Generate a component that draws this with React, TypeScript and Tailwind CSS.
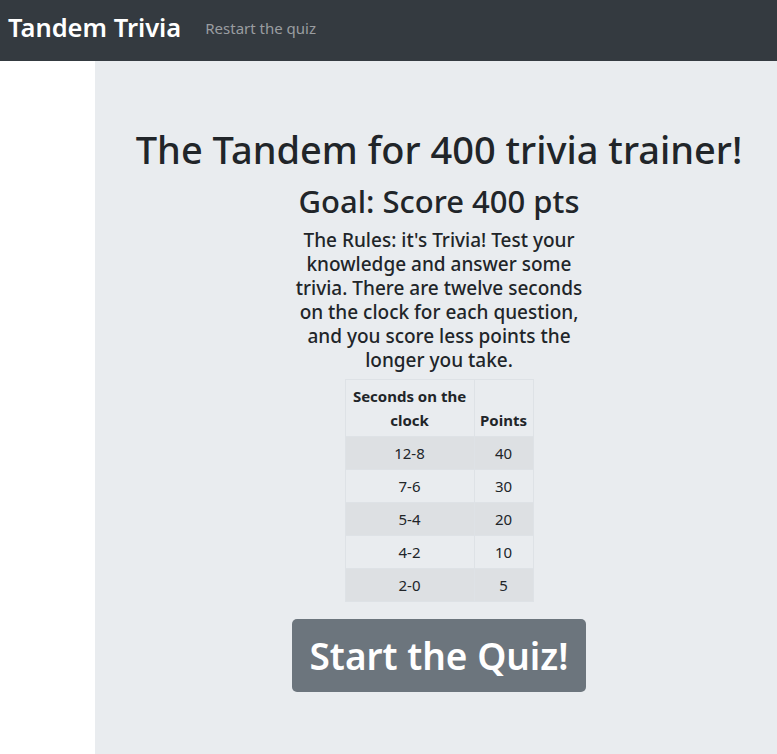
import React from 'react'

const rows = [
  ['12-8', '40'],
  ['7-6', '30'],
  ['5-4', '20'],
  ['4-2', '10'],
  ['2-0', '5'],
]

export default function App() {
  return (
    <div className="min-h-[754px] w-[777px] overflow-hidden bg-white font-['Noto_Sans',sans-serif] text-[#212529] flex flex-col">
      <nav className="h-[61px] bg-[#343a40] flex items-center px-2 gap-[24px] shrink-0">
        <span className="text-white text-[25.5px] font-semibold leading-none -mt-[5px]">Tandem Trivia</span>
        <a className="text-[#9a9da0] text-[15px] -mt-[4px]">Restart the quiz</a>
      </nav>
      <div className="flex flex-1">
        <div className="w-[95px] shrink-0" />
        <main className="w-[688px] shrink-0 bg-[#e9ecef] pt-16 pb-16 flex flex-col items-center">
          <h1 className="text-[38px] font-medium leading-[1.2] mt-[2px] mb-[10px]">The Tandem for 400 trivia trainer!</h1>
          <h2 className="text-[31px] font-medium leading-[1.2]">Goal: Score 400 pts</h2>
          <p className="w-[300px] text-center text-[19px] font-medium leading-[24px] mt-[8px] mb-[7px]">
            The Rules: it's Trivia! Test your knowledge and answer some trivia. There are twelve seconds on the clock for each question, and you score less points the longer you take.
          </p>
          <table className="border-collapse text-[15px] leading-[24px] mb-[17px]">
            <thead>
              <tr>
                <th className="w-[129px] border border-[#dee2e6] px-[5px] py-[4px] font-bold align-bottom">Seconds on the clock</th>
                <th className="w-[59px] border border-[#dee2e6] px-[5px] py-[4px] font-bold align-bottom">Points</th>
              </tr>
            </thead>
            <tbody>
              {rows.map(([s, p], i) => (
                <tr key={s} className={i % 2 === 0 ? 'bg-[#dde0e3]' : ''}>
                  <td className="border border-[#dee2e6] px-[5px] py-[4px] text-center">{s}</td>
                  <td className="border border-[#dee2e6] px-[5px] py-[4px] text-center">{p}</td>
                </tr>
              ))}
            </tbody>
          </table>
          <button className="bg-[#6c757d] text-white text-[37px] font-semibold leading-[1.5] px-[18px] py-[9px] rounded-[5px]">Start the Quiz!</button>
        </main>
      </div>
    </div>
  )
}
